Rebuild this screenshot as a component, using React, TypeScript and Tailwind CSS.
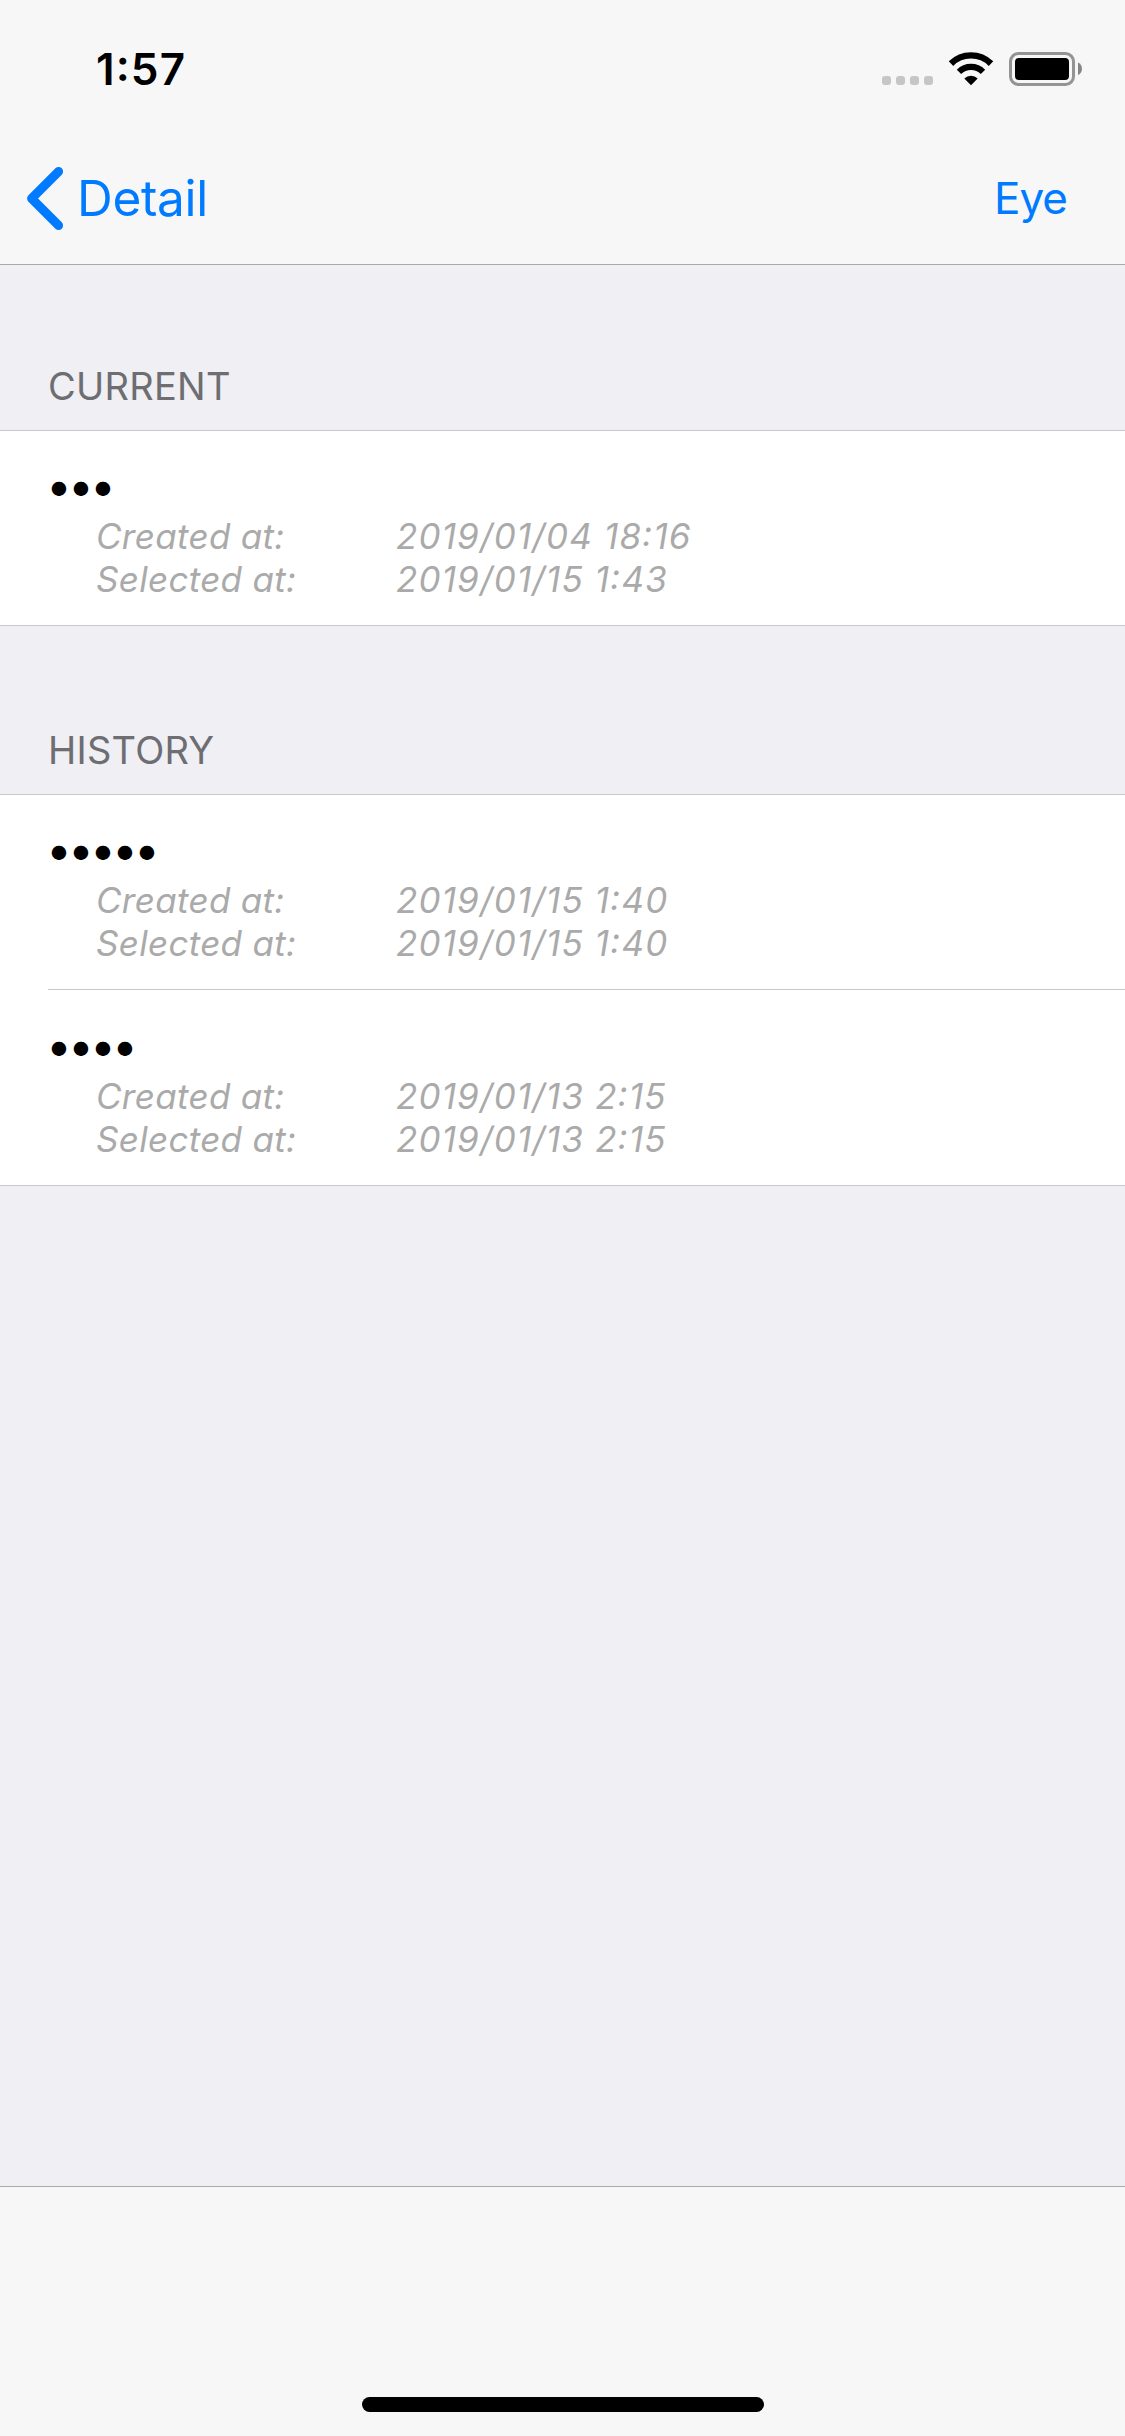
import { Fragment } from "react";

const FONT = "font-[Inter,'Liberation_Sans',sans-serif]";

type Entry = { mask: string; created: string; selected: string };

const current: Entry[] = [
  { mask: "•••", created: "2019/01/04 18:16", selected: "2019/01/15 1:43" },
];

const history: Entry[] = [
  { mask: "•••••", created: "2019/01/15 1:40", selected: "2019/01/15 1:40" },
  { mask: "••••", created: "2019/01/13 2:15", selected: "2019/01/13 2:15" },
];

/* Time text whose colon is centred on the height of the digits. */
function Time({ value }: { value: string }) {
  return (
    <span className="[font-feature-settings:'calt'_0]">
      {value.split(":").map((part, i) => (
        <Fragment key={i}>
          {i > 0 && <span className="relative -top-[0.091em]">:</span>}
          {part}
        </Fragment>
      ))}
    </span>
  );
}

function StatusBar() {
  return (
    <div className="flex h-[132px] items-start justify-between pt-[39px] pr-[43px] pl-[96px]">
      <span className="text-[44px] leading-[60px] font-semibold tracking-[1.1px] text-black">
        <Time value="1:57" />
      </span>
      <div className="flex pt-[12px]">
        <div className="flex gap-[5px] pt-[25px]">
          {[0, 1, 2, 3].map((i) => (
            <span key={i} className="size-[9px] rounded-[3px] bg-[#c6c6c6]" />
          ))}
        </div>
        <svg className="ml-[15px]" width="46" height="36" viewBox="0 0 46 36" fill="none">
          <path d="M3 12.6 A28.5 28.5 0 0 1 43 12.6" stroke="#000" strokeWidth="6.4" />
          <path d="M11 20.9 A17 17 0 0 1 35 20.9" stroke="#000" strokeWidth="6.2" />
          <path d="M16.3 27.6 A9.5 9.5 0 0 1 29.7 27.6 L23 34.2 Z" fill="#000" />
        </svg>
        <svg className="ml-[15px]" width="73" height="36" viewBox="0 0 73 36" fill="none">
          <rect x="1.5" y="2.5" width="63" height="31" rx="8" stroke="#949494" strokeWidth="3" />
          <rect x="6" y="7" width="54" height="22" rx="4" fill="#000" />
          <path d="M69 11.5 C74.3 13.5 74.3 22 69 24 Z" fill="#858585" />
        </svg>
      </div>
    </div>
  );
}

function NavBar() {
  return (
    <div className="flex h-[132px] items-center justify-between pr-[58px] pl-[25px] text-[#007aff]">
      <a className="flex items-center">
        <svg width="42" height="66" viewBox="0 0 42 66" fill="none">
          <path
            d="M33.6 6.5 L6.6 33.5 L33.6 60.5"
            stroke="currentColor"
            strokeWidth="9"
            strokeLinecap="round"
            strokeLinejoin="round"
          />
        </svg>
        <span className="ml-[10px] text-[49.5px] leading-[60px] tracking-[-0.3px]">Detail</span>
      </a>
      <a className="text-[44px] leading-[60px] tracking-[-1px]">Eye</a>
    </div>
  );
}

function Row({ entry, divided }: { entry: Entry; divided: boolean }) {
  return (
    <div className="pl-[48px]">
      <div className={divided ? "h-[196px] border-t border-[#c8c7cc] pt-[25px]" : "h-[194px] pt-[24px]"}>
        <div className="-ml-[2px] h-[60px] text-[46px] leading-[60px] tracking-[-3.9px] text-black">{entry.mask}</div>
        <div className="grid grid-cols-[300px_1fr] pl-[48px] text-[35px] leading-[43px] tracking-[0.3px] text-[#aaaaaa] italic">
          <span>Created at:</span>
          <span className="tracking-[1.15px]">
            <Time value={entry.created} />
          </span>
          <span>Selected at:</span>
          <span className="tracking-[1.15px]">
            <Time value={entry.selected} />
          </span>
        </div>
      </div>
    </div>
  );
}

function Section({ title, entries, first }: { title: string; entries: Entry[]; first?: boolean }) {
  return (
    <section>
      <h2
        className={
          (first ? "h-[165px] pt-[96px]" : "h-[168px] pt-[99px]") +
          " pl-[48px] text-[38px] leading-[50px] font-normal tracking-[0.25px] text-[#6d6d72]"
        }
      >
        {title}
      </h2>
      <div className="border-y border-[#c8c7cc] bg-white">
        {entries.map((e, i) => (
          <Row key={i} entry={e} divided={i > 0} />
        ))}
      </div>
    </section>
  );
}

export default function App() {
  return (
    <div className={`${FONT} flex h-[2436px] w-[1125px] flex-col overflow-hidden bg-[#efeff4]`}>
      <header className="h-[265px] shrink-0 border-b border-[#a9a9ab] bg-[#f7f7f7]">
        <StatusBar />
        <NavBar />
      </header>
      <main className="flex-1">
        <Section title="CURRENT" entries={current} first />
        <Section title="HISTORY" entries={history} />
      </main>
      <footer className="flex h-[250px] shrink-0 items-end justify-center border-t border-[#a9a9ab] bg-[#f7f7f7] pb-[24px]">
        <div className="h-[15px] w-[402px] rounded-full bg-black" />
      </footer>
    </div>
  );
}
